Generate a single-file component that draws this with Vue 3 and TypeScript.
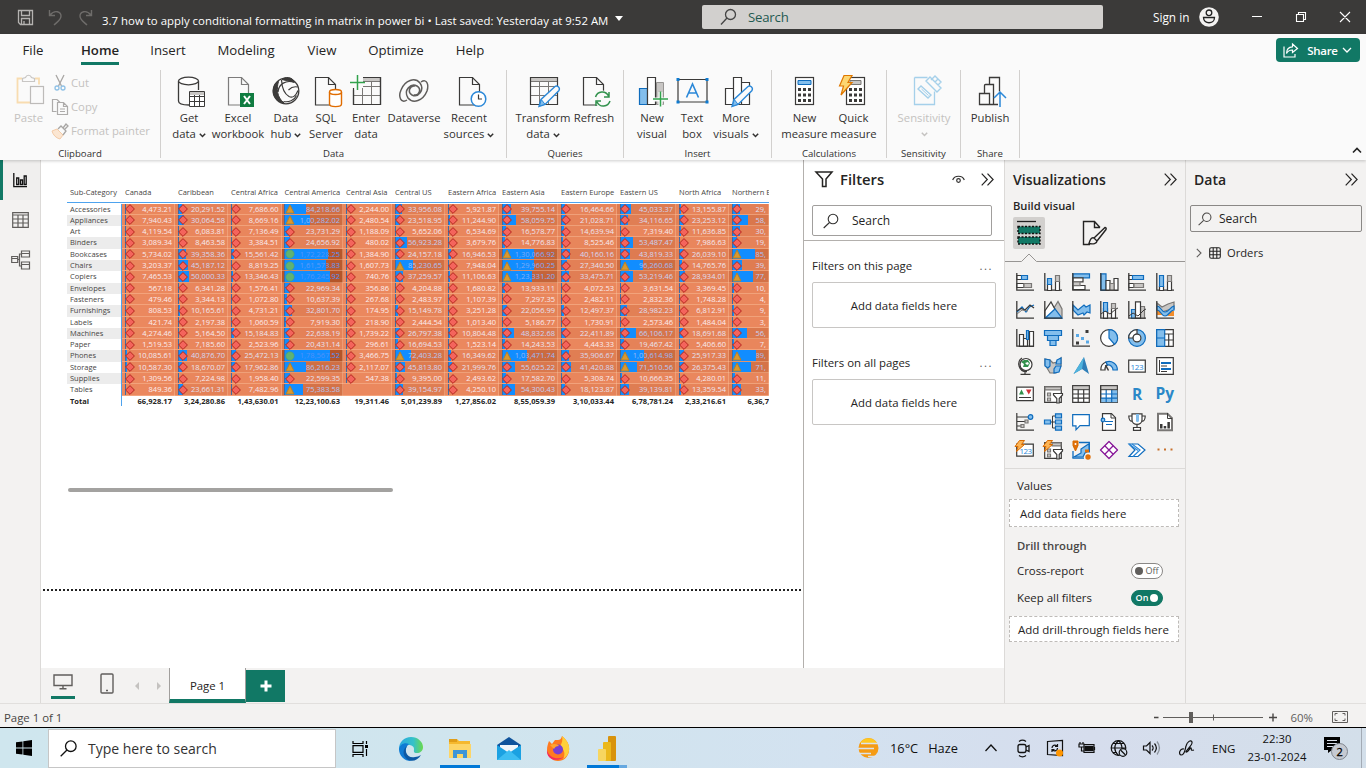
<script setup lang="ts">
const K = '#3b3a39'
const G = '#797775'
const B = '#0f6cbd'
const L = '#83beec'

const page = (x: number, w = 21) =>
  `<path d="M${x + 0.5} 2.5h${w - 8}l7 7v20.500h-${w - 1}z" fill="#fafafa" stroke="${K}" stroke-width="1.2"/><path d="M${x + w - 7.5} 2.500v7h7" fill="none" stroke="${K}" stroke-width="1.2"/>`
const pencil = `<path d="M12 31.500l2-7L28 11.500c2-1.500 5.500 1 4 4L18 29.500z" fill="#fafafa" stroke="#2b88d8" stroke-width="1.4"/><path d="M12.500 31l1.800-6.500 3.700 4.800z" fill="${L}" stroke="#2b88d8"/>`
const grid = (c: string) =>
  `<path d="M3.500 2.500h27v27h-27zM3.500 11.500h27M3.500 20.500h27M12.500 6v23M21.500 6v23" fill="none" stroke="${c}"/><path d="M3.500 2.500h27v4h-27z" fill="#c8c6c4" stroke="${c}"/><path d="M3.500 2.500h27v27h-27z" fill="none" stroke="${K}" stroke-width="1.2"/>`
const calc = (x: number) =>
  `<rect x="${x + 0.5}" y="2.500" width="18" height="27" fill="#fff" stroke="${K}" stroke-width="1.200"/><path d="M${x + 3} 13h3v3h-3zM${x + 8} 13h3v3h-3zM${x + 13} 13h3v3h-3zM${x + 3} 18.500h3v3h-3zM${x + 8} 18.500h3v3h-3zM${x + 13} 18.500h3v3h-3zM${x + 3} 24h3v3h-3zM${x + 8} 24h3v3h-3zM${x + 13} 24h3v3h-3z" fill="${K}"/>`

const big: Record<string, string> = {
  get: `<path d="M5.500 6v20c0 2.500 4.500 4 10.500 4M25.500 6v9" fill="none" stroke="${K}" stroke-width="1.300"/><ellipse cx="15.500" cy="6" rx="10" ry="3.800" fill="#fff" stroke="${K}" stroke-width="1.300"/><path d="M16.500 16.500h15v15h-15zM16.500 21.500h15M16.500 26.500h15M21.500 17v14M26.500 17v14" fill="#fff" stroke="${K}"/><path d="M17 17h14v3H17z" fill="#c8c6c4"/>`,
  excel: `<g opacity=".65">${page(6)}</g><rect x="18" y="18" width="14" height="14" fill="#107c41"/><path d="M22 21l6 8M28 21l-6 8" stroke="#fff" stroke-width="2"/>`,
  hub: `<circle cx="16" cy="16" r="12.800" fill="#fafafa" stroke="${K}" stroke-width="1.300"/><path d="M12 4.500C15 1.500 22 1.500 24.500 7L20 6.200c-3-.5-5.500-.8-8-1.700z" fill="${K}" stroke="${K}"/><path d="M8.500 6.500C6.500 13 6.500 22 14 28 7 27 3 21 3.200 15.500 3.500 11 5.500 8 8.500 6.500z" fill="${K}" stroke="${K}"/><path d="M11.500 5c.5 8 3 14 7.500 16.500M24.500 7.500C16 4.500 8.500 9 8 17M19 21.500c4 2 7-1 9-6M13.500 26.500c5 1 11-1 13-6M18.500 15c2-2 5-4 9-3" fill="none" stroke="${K}" stroke-width="1.200"/>`,
  sql: `${page(5)}<path d="M19.500 17v12c0 3.500 12 3.500 12 0V17" fill="#fff" stroke="#e06c00" stroke-width="1.400"/><ellipse cx="25.500" cy="17" rx="6" ry="2.500" fill="#fff" stroke="#e06c00" stroke-width="1.400"/>`,
  enter: `${grid(G)}<path d="M0 0h13v13H0z" fill="#fafafa"/><path d="M7.500 0v15M0 7.500h15" stroke="#31a24c" stroke-width="1.500"/><path d="M13 2.500h17.500v27h-27V15" fill="none" stroke="${K}" stroke-width="1.200"/>`,
  dataverse: `<path d="M9 25C3 29 0 22 3 15 7 5 17 2 22 8c5 7-2 15-8 12-5-3-2-10 3-9M23 7c6-4 8 3 6 9-4 10-14 13-19 7-5-8 3-15 9-12 5 3 2 10-3 9" fill="none" stroke="#605e5c" stroke-width="1.500"/>`,
  recent: `${page(6)}<circle cx="25.500" cy="24" r="7.300" fill="#fff" stroke="#2b88d8" stroke-width="1.500"/><path d="M25.500 19.500V24H29" fill="none" stroke="${K}" stroke-width="1.200"/>`,
  transform: `${grid(G)}${pencil}`,
  refresh: `${page(5)}<circle cx="24.500" cy="24" r="8.500" fill="#fafafa"/><path d="M17.500 22c2-6 10-7 13-1M31 17v5h-5M32 26c-2 6-10 7-13 1M18 31v-5h5" fill="none" stroke="#31914c" stroke-width="1.500"/>`,
  newvisual: `<path d="M3.500 13.500h8v16h-8z" fill="${L}" stroke="${B}" stroke-width="1.200"/><path d="M20.500 7.500h7v22h-7z" fill="#c8c6c4" stroke="#979593"/><path d="M11.500 2.500h8v27h-8z" fill="#fff" stroke="${K}" stroke-width="1.200"/><path d="M24.500 17v15M17 24.500h15" stroke="#fafafa" stroke-width="4"/><path d="M24.500 16.500v15M17 24h15" stroke="#31a24c" stroke-width="1.500"/>`,
  textbox: `<path d="M2 4.500h29v22.500H2z" fill="#fafafa" stroke="${K}" stroke-width="1.200"/><path d="M.5 3h3v3h-3zM29.500 3h3v3h-3zM.5 25.500h3v3h-3zM29.500 25.500h3v3h-3z" fill="#0f7bd0"/><path d="M10.500 22.500L16.500 9l6 13.500M12.500 18h8" fill="none" stroke="#2b88d8" stroke-width="1.600"/>`,
  more: `<path d="M5.500 13.500h8v16h-8zM21.500 7.500h8v22h-8zM13.500 2.500h8v27h-8z" fill="#fff" stroke="${K}" stroke-width="1.200"/>${pencil}`,
  measure: `${calc(6)}<path d="M9 5.500h13v4H9z" fill="${L}" stroke="${B}"/>`,
  quick: `${calc(8)}<path d="M12 5.500h11v4H12z" fill="#c8c6c4" stroke="${G}"/><path d="M6 .5h8l-4 7h4L3 20l2.500-9h-4z" fill="#fcd672" stroke="#e07800" stroke-width="1.200"/>`,
  sens: `<path d="M6.500 2.500h13M6.500 2.500v27h20v-13" fill="none" stroke="#a5d0ea" stroke-width="1.300"/><g fill="#fafafa" stroke="#a5d0ea" stroke-width="1.400"><path d="M10 14l3-3 10 9-3 3z"/><path d="M13.500 14l7 6.500" stroke-width="1"/><path d="M18 6l4-4 11 11-4 4zM23 5l4-4 3 3-2 2M27 7l3-3 3 3-3 3"/></g>`,
  publish: `<path d="M15.500 10V2.500h10v14M10.500 18v-7.500c0-1 1-1 1-1h8V29.500M5.500 18.500h10v11h-10zM15 29.500h9" fill="none" stroke="${K}" stroke-width="1.300"/><path d="M26 32V17M20 23l6-6 6 6" fill="none" stroke="#2b88d8" stroke-width="1.500"/>`,
}

interface Btn { i: string; w: number; t: string; s?: string; c?: boolean; off?: boolean }
interface Group { name: string; w: number; pad: number; items: Btn[] }
const groups: Group[] = [
  { name: 'Data', w: 346, pad: 4, items: [
    { i: 'get', w: 48, t: 'Get', s: 'data', c: true }, { i: 'excel', w: 50, t: 'Excel', s: 'workbook' },
    { i: 'hub', w: 46, t: 'Data', s: 'hub', c: true }, { i: 'sql', w: 34, t: 'SQL', s: 'Server' },
    { i: 'enter', w: 46, t: 'Enter', s: 'data' }, { i: 'dataverse', w: 50, t: 'Dataverse' },
    { i: 'recent', w: 60, t: 'Recent', s: 'sources', c: true }] },
  { name: 'Queries', w: 117, pad: 6, items: [
    { i: 'transform', w: 60, t: 'Transform', s: 'data', c: true }, { i: 'refresh', w: 42, t: 'Refresh' }] },
  { name: 'Insert', w: 148, pad: 8, items: [
    { i: 'newvisual', w: 40, t: 'New', s: 'visual' }, { i: 'textbox', w: 40, t: 'Text', s: 'box' },
    { i: 'more', w: 48, t: 'More', s: 'visuals', c: true }] },
  { name: 'Calculations', w: 115, pad: 8, items: [
    { i: 'measure', w: 49, t: 'New', s: 'measure' }, { i: 'quick', w: 49, t: 'Quick', s: 'measure' }] },
  { name: 'Sensitivity', w: 74, pad: 7, items: [{ i: 'sens', w: 60, t: 'Sensitivity', s: '', c: true, off: true }] },
  { name: 'Share', w: 59, pad: 7, items: [{ i: 'publish', w: 44, t: 'Publish' }] },
]

const ax = `<path d="M.8 0v17.200H18" fill="none" stroke="${K}" stroke-width="1.300"/>`
const bb = `fill="${L}" stroke="${B}" stroke-width="1.200"`
const gb = `fill="#c8c6c4" stroke="${G}" stroke-width="1.200"`
const wb = `fill="#fff" stroke="${K}" stroke-width="1.200"`
const bolt = `<path d="M3.500-.5h5l-3 4h3L.5 10.500l1.500-5h-3z" fill="#fcb455" stroke="#d86a00"/>`
const funnel = `<path d="M9.500 8.500h9v1.500l-3.300 3.500v4.500h-2.400v-4.500L9.500 10z" ${wb}/>`
const viz: string[] = [
  `${ax}<path d="M1 2.500h5v4H1zM1 10.500h7v4H1z" ${wb}/><path d="M5.500 2.500h6v4h-6z" ${bb}/><path d="M8 10.500h7.500v4H8z" ${gb}/>`,
  `${ax}<path d="M3.500 11.500h4v6h-4zM11.500 8.500h4v9h-4z" ${wb}/><path d="M3.500 5.500h4v6h-4z" ${bb}/><path d="M11.500 2.500h4v6h-4z" ${gb}/>`,
  `<path d="M1 .8h16.500v4H1z" ${bb}/><path d="M1 4.800h10v4H1zM1 12.500h12v4H1z" ${wb}/><path d="M1 8.800h7v3.800H1z" ${gb}/>${ax}`,
  `<path d="M1 .8h5v16.500H1z" ${bb}/><path d="M6 7.500h4v10H6zM14 5.500h4v12h-4z" ${wb}/><path d="M10 10.500h4v7h-4z" ${gb}/>${ax}`,
  `${ax}<path d="M1 10.500h5v4H1zM1 2.500h4v4H1z" ${wb}/><path d="M4.500 2.500h11v4h-11z" ${bb}/><path d="M6 10.500h9.500v4H6z" ${gb}/>`,
  `${ax}<path d="M3.500 13.500h4v4h-4zM11.500 8.500h4v9h-4z" ${wb}/><path d="M3.500 2.500h4v11h-4z" ${bb}/><path d="M11.500 2.500h4v6h-4z" ${gb}/>`,
  `${ax}<path d="M1 11l5-5 4 5 3.500-5 4.500-2" fill="none" stroke="${B}" stroke-width="1.300"/><path d="M1 10l4-2.500 4 1.500 5-5 4 3" fill="none" stroke="${K}" stroke-width="1.300"/><path d="M1 13l5-4 6 1" fill="none" stroke="${G}"/>`,
  `<path d="M8 10l6-9.500L18 8v9H8z" ${gb}/><path d="M.8 17V10L7 1l7 13-3 3z" ${wb}/><path d="M1 17.200L11 8l7 9.200z" ${bb}/>${ax}`,
  `<path d="M1 4l5 5 6-5 2 2 4-2v8l-3-1-3 3-1-2-5 2-5-5z" ${bb}/>${ax}`,
  `<path d="M3.500 7.500h4v10h-4zM11.500 7.500h4v10h-4z" ${wb}/><path d="M3.500 1.500h4v9h-4z" ${bb}/><path d="M11.500 2.500h4v5h-4z" ${gb}/><path d="M1 13l4-3 5 3 6-5 2-1" fill="none" stroke="${K}"/>${ax}`,
  `<path d="M3.500 8.500h4v9h-4z" ${bb}/><path d="M12.500 5.500h4v12h-4z" ${gb}/><path d="M7.500 .8h5v16.500h-5z" ${wb}/><path d="M1 15l4-3 5 3 6-6 2-1" fill="none" stroke="${K}"/>${ax}`,
  `<path d="M1 2l5 4 6-3 6-2v7l-6 1-6 2-5-2z" ${gb}/><path d="M1 9h5v5H1zM12 10h6v5h-6z" fill="#f28d2c"/><path d="M1 5c4 0 4 6 8 6s5-5 9-6v4c-4 0-5 6-9 6S5 9 1 9z" ${bb}/>${ax}`,
  `<path d="M3.500 5.500h4v12h-4zM7.500 9.500h4v8h-4zM13.500 2.500h4v15h-4z" ${wb}/><path d="M10.500 1.500h2v9h-2z" ${bb}/>${ax}`,
  `<path d="M.5 1.500h17v5h-17zM3.500 6.500h11v5h-11zM6 11.500h6v5H6z" ${bb}/>`,
  `${ax}<path d="M4 5h3v3H4zM9 8h3v3H9zM14 11.500h3v3h-3z" fill="#5aa9e6"/><path d="M13.500 1h3v3h-3zM4 12.500h3v3H4z" fill="${K}"/>`,
  `<circle cx="9" cy="9" r="8.400" ${wb}/><path d="M9 9V.6a8.400 8.400 0 0 1 5.500 14.800z" ${bb}/>`,
  `<circle cx="9" cy="9" r="8.400" ${bb}/><path d="M9 .6A8.400 8.400 0 0 0 .6 9h4.500A4 4 0 0 1 9 5z" ${wb}/><circle cx="9" cy="9" r="3.900" ${wb}/>`,
  `<path d="M.7 .7h16.600v16.600H.7z" ${wb}/><path d="M.7 .7h8v16.600h-8zM.7 9h8" ${bb}/><path d="M8.700 5h8.600M8.700 11h8.600M12.700 5v12" stroke="${K}" stroke-width="1.200"/>`,
  `<circle cx="10" cy="7.500" r="6" ${wb}/><path d="M8 3l4 0 2 3-2 4-5 0 1-3-3-2z" fill="#31914c"/><path d="M9 6l3-1 1 2-2 1z" fill="#fff"/><path d="M6 1C0 5 3 15 11 14.500M9 14.500v2.500M4.500 17.300h10" fill="none" stroke="${K}" stroke-width="1.300"/>`,
  `<path d="M1 2l5 1 3 3 4-1 4-4v8l-4 3-1 4H6l-3-5-2-3z" ${gb}/><path d="M1 2l5 1v6l-2 2-3-2z" ${bb}/><path d="M12 9h5l-2 6-5 1v-4z" ${bb}/><path d="M13 3l4-2v6h-5z" ${bb}/>`,
  `<path d="M12 0l5 17-7-5-8.500 5z" fill="#2f7fb8"/><path d="M12 0l-2 12-8.500 5z" fill="#4fb3dd"/>`,
  `<path d="M.8 13A8.200 8.200 0 0 1 6 5l1.500 3A5 5 0 0 0 5 13z" ${wb}/><path d="M6 5a8.200 8.200 0 0 1 11.300 8H13A5 5 0 0 0 7.500 8z" ${bb}/><path d="M8.500 13.500L5.500 8" stroke="${K}" stroke-width="1.500"/>`,
  `<path d="M.7 3.200h16.600v12H.7z" ${wb}/><text x="2.600" y="12.500" font-size="8" font-family="Open Sans" textLength="13" fill="#2b88d8">123</text>`,
  `<path d="M.7 .7h16.600v16.600H.7z" ${wb}/><path d="M3.500 3v12" stroke="${K}"/><path d="M5 6h10M5 12h10" stroke="${B}" stroke-width="2"/><path d="M5 9h6M5 14.500h6" stroke="${K}"/>`,
  `<path d="M.7 2.200h16.600v13.500H.7z" ${wb}/><path d="M3 9.500L5.500 4.500 8 9.500z" fill="#31914c"/><path d="M10 4.500h5.500l-2.700 5z" fill="#d13438"/><path d="M3 12.500h12" stroke="${K}"/>`,
  `<path d="M.7 1.500h16.600v15.800H.7z" ${wb}/><path d="M1 1.800h16v3H1z" ${gb}/><path d="M3.500 8h3v3h-3zM3.500 13h3v3h-3z" ${gb}/>${funnel}`,
  `<path d="M.7 .7h16.600v16.600H.7zM.7 9h16.600M.7 13.200h16.600M6.200 4v13M11.700 4v13" ${wb}/><path d="M.7 .7h16.600v4H.7z" fill="#c8c6c4" stroke="${K}"/>`,
  `<path d="M.7 .7h16.600v16.600H.7z" ${wb}/><path d="M11.700 5h5.600v12.300H1V13h10.700z" fill="${L}"/><path d="M.7 9h16.600M.7 13.200h16.600M6.200 4v13M11.700 4v13" stroke="${B}" stroke-width="1.200"/><path d="M.7 .7h16.600v4H.7z" fill="#c8c6c4" stroke="${K}"/><path d="M.7 .7v16.600" stroke="${K}"/>`,
  `<text x="4" y="14.500" font-size="15.500" font-weight="700" font-family="Open Sans" textLength="9.500" fill="#2b88c8">R</text>`,
  `<text x="-.5" y="13.500" font-size="15.500" font-weight="700" font-family="Open Sans" textLength="18.500" fill="#2b88c8">Py</text>`,
  `<path d="M.8 0v17.200H18M1 4h12M1 8.500h8M1 13h4" fill="none" stroke="${K}" stroke-width="1.200"/><circle cx="14.500" cy="4" r="2.300" ${bb}/><path d="M9 7h3v3H9zM5 11.500h3v3H5z" ${gb}/>`,
  `<path d="M6 9h5M8.500 3v12M8.500 3h3M8.500 15h3" fill="none" stroke="${K}"/><path d="M.5 7h6v4h-6zM11.500 .8h6v4h-6zM11.500 7h6v4h-6zM11.500 13.200h6v4h-6z" ${bb}/>`,
  `<path d="M.7 1.700h16.600v11H8L4 16.800v-4H.7z" fill="#fff" stroke="${B}" stroke-width="1.200"/>`,
  `<path d="M2.500 .7h9l4 4v12.600h-13z" ${wb}/><path d="M11 .7v4.300h4.500" fill="none" stroke="${K}"/><path d="M5 8.500h8M6 11.500h6" stroke="${B}"/><path d="M2.500 10.500v3" stroke="${K}"/><circle cx="3" cy="7" r="1.800" ${bb}/>`,
  `<path d="M4 .8h10v6c0 6-10 6-10 0zM4 3H.8c0 4 1 5 3.500 5.500M14 3h3.200c0 4-1 5-3.500 5.500M9 11.500v3M5.500 14.500h7v2.800h-7z" ${wb}/><path d="M8 1h3v7c-1 2-3 1-3 0z" fill="${L}"/>`,
  `<path d="M2 .7h9.500l4.500 4.500v12.100H2z" fill="#fff" stroke="${G}" stroke-width="2"/><path d="M11.500 0v5.500h4.500" fill="none" stroke="${K}"/><path d="M4 11h2.500v4.500H4zM7.700 13h2.500v2.500H7.700zM11.400 9h2.500v6.500h-2.500z" fill="${K}"/>`,
  `<path d="M.7 3.200h16.600v12H.7z" ${wb}/><text x="3.500" y="12.500" font-size="8" font-family="Open Sans" textLength="12.500" fill="#2b88d8">123</text>${bolt}`,
  `<path d="M.7 1.500h16.600v15.800H.7z" ${wb}/><path d="M8 1.800h9v3H8z" ${gb}/><path d="M3.500 8h3v3h-3zM3.500 13h3v3h-3z" ${gb}/>${funnel}${bolt}`,
  `<path d="M7 1.500h10.300v10M1 10v7.200h11" fill="none" stroke="${B}" stroke-width="1.300"/><path d="M15 4l-6 4v4l-7 4h9l2-4 4-2V3z" ${bb}/><path d="M1 0h5v4.500L3.500 10 1 4.500z" fill="#e0700a" stroke="#d86a00"/><circle cx="3.500" cy="3" r="1" fill="#fff"/><circle cx="16" cy="16" r="2.700" fill="#e0700a"/><path d="M13 8.500h4v3h-4z" fill="#e0700a"/>`,
  `<g fill="#fff" stroke="#881798" stroke-width="1.300" stroke-linejoin="round"><path d="M9 .5L17.500 9 9 17.500.5 9z"/><path d="M4.800 4.800l8.400 8.400M13.200 4.800l-8.400 8.400"/></g>`,
  `<path d="M1 3h9l7 6-7 6.500H1L7 9z" fill="#fff" stroke="#0f6cbd" stroke-width="1.200"/><path d="M4 3l8 6-7 6.500M1 3l9 6.500" fill="none" stroke="#2b88d8" stroke-width="1.200"/>`,
  `<path d="M1.500 7.500h2v2h-2zM8 7.500h2v2H8zM14.500 7.500h2v2h-2z" fill="#c8702c"/>`,
]

const cols = [
  { n: 'Canada', w: 53 }, { n: 'Caribbean', w: 53 }, { n: 'Central Africa', w: 53.5 }, { n: 'Central America', w: 61.5 },
  { n: 'Central Asia', w: 49 }, { n: 'Central US', w: 53 }, { n: 'Eastern Africa', w: 54 }, { n: 'Eastern Asia', w: 59 },
  { n: 'Eastern Europe', w: 59 }, { n: 'Eastern US', w: 59 }, { n: 'North Africa', w: 53 }, { n: 'Northern E', w: 40 },
]
const raw = `Accessories|4,473.21|20,291.52|7,686.60|84,218.66|2,244.00|33,956.08|5,921.87|39,755.14|16,464.66|45,033.37|13,155.87|29,
Appliances|7,940.43|30,064.58|8,669.16|1,00,282.02|2,480.54|23,518.95|11,244.90|58,059.75|21,028.71|34,116.65|23,253.12|58,
Art|4,119.54|6,083.81|7,136.49|23,731.29|1,188.09|5,652.06|6,534.69|16,578.77|14,639.94|7,319.40|11,636.85|30,
Binders|3,089.34|8,463.58|3,384.51|24,656.92|480.02|56,923.28|3,679.76|14,776.83|8,525.46|53,487.47|7,986.63|19,
Bookcases|5,734.02|39,358.36|15,561.42|1,72,228.25|1,384.90|24,157.18|16,946.53|1,30,066.92|40,160.16|43,819.33|26,039.10|85,
Chairs|3,203.37|45,187.12|8,819.25|1,61,573.83|1,607.73|85,230.65|7,948.04|1,29,960.25|27,340.50|96,260.68|14,765.76|39,
Copiers|7,465.53|50,000.33|13,346.43|1,76,245.92|740.76|37,259.57|11,106.63|1,23,331.20|33,475.71|53,219.46|28,934.01|77,
Envelopes|567.18|6,341.28|1,576.41|22,969.34|356.86|4,204.88|1,680.82|13,933.11|4,072.53|3,631.54|3,369.45|10,
Fasteners|479.46|3,344.13|1,072.80|10,637.39|267.68|2,483.97|1,107.39|7,297.35|2,482.11|2,832.36|1,748.28|4,
Furnishings|808.53|10,165.61|4,731.21|32,801.70|174.95|15,149.78|3,251.28|22,056.99|12,497.37|28,982.23|6,812.91|9,
Labels|421.74|2,197.38|1,060.59|7,919.30|218.90|2,444.54|1,013.40|5,186.77|1,730.91|2,573.46|1,484.04|3,
Machines|4,274.46|5,164.50|15,184.83|22,638.19|1,739.22|26,797.38|10,804.48|48,832.68|22,411.89|66,106.17|18,691.68|56,
Paper|1,519.53|7,185.60|2,523.96|20,431.14|296.61|16,694.53|1,523.14|14,243.53|4,443.33|19,467.42|5,406.60|7,
Phones|10,085.61|40,876.70|25,472.13|1,78,567.52|3,466.75|72,403.28|16,349.62|1,03,471.74|35,906.67|1,00,614.98|25,917.33|89,
Storage|10,587.30|18,670.07|17,962.86|86,216.23|2,117.07|45,813.80|21,999.76|55,625.22|41,420.88|71,510.56|26,375.43|71,
Supplies|1,309.56|7,224.98|1,958.40|22,599.35|547.38|9,395.00|2,493.62|17,582.70|5,308.74|10,666.35|4,280.01|11,
Tables|849.36|23,661.31|7,482.96|75,383.58||39,154.97|4,250.10|54,300.43|18,123.87|39,139.81|13,359.54|33,`
const totals = ['66,928.17', '3,24,280.86', '1,43,630.01', '12,23,100.63', '19,311.46', '5,01,239.89', '1,27,856.02', '8,55,059.39', '3,10,033.44', '6,78,781.24', '2,33,216.61', '6,36,7']

const mix = (a: number[], b: number[], t: number) => `rgb(${a.map((v, i) => Math.round(v + (b[i] - v) * t)).join(',')})`
const rows = raw.split('\n').map((line) => {
  const [name, ...vals] = line.split('|')
  return {
    name,
    cells: vals.map((s, i) => {
      const v = i === 11 ? Number(s.replace(',', '')) * 1000 + 500 : Number(s.replace(/,/g, ''))
      const t = Math.min(1, v / 178567)
      const span = i === 11 ? 66 : cols[i].w
      return {
        s,
        bar: v * span * 0.0000042,
        bg: mix([235, 136, 94], [180, 84, 40], t),
        fg: mix([252, 238, 240], [80, 145, 250], t),
        kind: v > 135000 ? 'c' : v > 70000 ? 't' : 'd',
      }
    }),
  }
})
const tabs = [['File', 33], ['Home', 100], ['Insert', 168], ['Modeling', 246], ['View', 322], ['Optimize', 396], ['Help', 470]] as [string, number][]
const tabWidths = tabs.map(([t, c], i) => ({ t, w: i === 0 ? 66 : 2 * (c - edge(i)) }))
function edge(i: number): number {
  return i === 0 ? 0 : 2 * tabs[i - 1][1] - edge(i - 1)
}
</script>

<template>
  <div class="app">
    <header class="title">
      <svg class="quick" viewBox="0 0 90 24" width="90" height="24"><g fill="none" stroke="#b5b3b1" stroke-width="1.300"><path d="M6.500 4.500h14v14h-12l-2-2zM9.500 4.500v5h8v-5M9.500 18.500v-6h8v6M12 18v-3"/></g><g fill="none" stroke="#6e6c6a" stroke-width="1.400"><path d="M37.500 4v5.500h5.500M38 9c5-6 11-3 11 1s-4 6-7 9M79.500 4v5.500H74M79 9c-5-6-11-3-11 1s4 6 7 9"/></g></svg>
      <span class="doc">3.7 how to apply conditional formatting in matrix in power bi • Last saved: Yesterday at 9:52 AM</span>
      <i class="drop"></i>
      <div class="tsearch"><svg width="18" height="18" viewBox="0 0 18 18"><circle cx="10.500" cy="6.500" r="5" fill="none" stroke="#444" stroke-width="1.300"/><path d="M7 10L1 16.500" stroke="#444" stroke-width="1.300"/></svg><span>Search</span></div>
      <span class="signin">Sign in</span>
      <svg class="user" width="20" height="20" viewBox="0 0 20 20"><circle cx="10" cy="10" r="9.800" fill="#f3f2f1"/><circle cx="10" cy="5.800" r="2.800" fill="none" stroke="#222" stroke-width="1.300"/><path d="M4.500 10.500h11c0 7-11 7-11 0z" fill="none" stroke="#222" stroke-width="1.300"/></svg>
      <svg class="win" width="110" height="20" viewBox="0 0 110 20" fill="none" stroke="#fff" stroke-width="1.100"><path d="M5 9.500h10M49.500 7.500h7v7h-7zM51.500 7.500v-2h7v7h-2M93 5l10 10M103 5L93 15"/></svg>
    </header>

    <section class="ribbon">
      <nav class="tabs">
        <div v-for="(t, i) in tabWidths" :key="t.t" class="tab" :class="{ on: i === 1 }" :style="{ width: t.w + 'px' }"><span>{{ t.t }}</span></div>
        <button class="share"><svg width="16" height="15" viewBox="0 0 16 15" fill="none" stroke="#fff" stroke-width="1.200"><path d="M1 3.500v10.500h11v-3M9.500 1l5 4.500-5 4V7C6 7 4.500 8.500 3.500 10.500 3.500 6 6 4 9.500 3.800z"/></svg><span>Share</span><svg width="10" height="7" viewBox="0 0 10 7" fill="none" stroke="#fff" stroke-width="1.300"><path d="M1 1l4 4 4-4"/></svg></button>
      </nav>
      <div class="groups">
        <div class="group clip">
          <div class="cliprow">
            <div class="paste"><svg width="30" height="34" viewBox="0 0 30 34" fill="none"><path d="M7 5.500H2.500v24H16M20 5.500h4v6" stroke="#f8dcb0" stroke-width="1.800"/><path d="M7.500 8.500v-3l3-1c1-3 5-3 6 0l3 1v3z" stroke="#c8c6c4" stroke-width="1.200"/><rect x="15.500" y="13.500" width="13" height="17" fill="#fafafa" stroke="#bdbbb9" stroke-width="1.200"/></svg><span>Paste</span></div>
            <div class="small">
              <div><svg width="18" height="18" viewBox="0 0 18 18" fill="none"><path d="M5 1l5.500 11M13 1L7.500 12" stroke="#a8a6a4" stroke-width="1.300"/><circle cx="6" cy="14" r="2" stroke="#8fc1e6" stroke-width="1.300"/><circle cx="12" cy="14" r="2" stroke="#8fc1e6" stroke-width="1.300"/></svg>Cut</div>
              <div><svg width="18" height="18" viewBox="0 0 18 18" fill="none" stroke="#adabaa" stroke-width="1.200"><path d="M6 1.500H1.500v12h4M6.500 4.500h6l4 4v8h-10zM12.500 4.500v4h4M9 11h5M9 13.500h5M6 1.500l3 3"/></svg>Copy</div>
              <div><svg width="18" height="18" viewBox="0 0 18 18" fill="none"><path d="M1 9l5-2 6 6-3 4c-4-1-7-4-8-8z" fill="#fbe6d2" stroke="#f3cba8"/><path d="M7 7l3-3 5 5-3 4M12 6l3-4 2 2-3 3" stroke="#a8a6a4" stroke-width="1.300"/></svg>Format painter</div>
            </div>
          </div>
          <div class="gname">Clipboard</div>
        </div>
        <div v-for="g in groups" :key="g.name" class="group" :style="{ width: g.w + 'px' }">
          <div class="btns" :style="{ paddingLeft: g.pad + 'px' }">
            <div v-for="b in g.items" :key="b.i" class="btn" :class="{ off: b.off }" :style="{ width: b.w + 'px' }">
              <svg class="bico" width="34" height="34" viewBox="0 0 34 34" v-html="big[b.i]"></svg>
              <span>{{ b.t }}</span>
              <span v-if="b.s !== undefined" class="l2">{{ b.s }}<svg v-if="b.c" class="chev" width="7" height="5" viewBox="0 0 7 5"><path d="M.8.8l2.700 2.700L6.200.8" fill="none" stroke="currentColor" stroke-width="1.500"/></svg></span>
            </div>
          </div>
          <div class="gname">{{ g.name }}</div>
        </div>
        <svg class="collapse" width="10" height="7" viewBox="0 0 10 7"><path d="M1 5.500l4-4 4 4" fill="none" stroke="#222" stroke-width="1.600"/></svg>
      </div>
    </section>

    <main class="body">
      <aside class="rail">
        <div class="r sel"><svg width="15" height="15" viewBox="0 0 15 15" fill="none" stroke="#111" stroke-width="1.300"><path d="M.8 0v13.700H14M3.700 5h2v6.500h-2zM7.500 7h2v4.500h-2zM11.200 3h2v8.500h-2z"/></svg></div>
        <div class="r"><svg width="17" height="16" viewBox="0 0 17 16" fill="none" stroke="#605e5c" stroke-width="1.200"><path d="M.7.700h15.600v14.600H.7zM.7 3h15.600M.7 7h15.600M.7 11h15.600M6 3v12M11 3v12"/></svg></div>
        <div class="r"><svg width="19" height="20" viewBox="0 0 19 20" fill="none" stroke="#605e5c" stroke-width="1.200"><path d="M10.500 1h8v6h-8zM10.500 12h8v7h-8zM10.500 3.500h8M10.500 14.500h8M.7 6.500h6v6h-6zM.7 8.500h6M6.700 9.500h2M10.500 4H8.500v12h2"/></svg></div>
      </aside>

      <div class="center">
        <div class="upper">
          <div class="canvas">
            <div class="matrix">
              <div class="mrow mhead"><div class="rh">Sub-Category</div><div v-for="c in cols" :key="c.n" class="ch" :style="{ width: c.w + 'px' }">{{ c.n }}</div></div>
              <div class="mbody">
                <div v-for="(r, ri) in rows" :key="r.name" class="mrow" :class="{ alt: ri % 2 }">
                  <div class="rh">{{ r.name }}</div>
                  <div v-for="(c, ci) in r.cells" :key="ci" class="cell" :style="{ width: cols[ci].w + 'px', background: c.bg, color: c.fg }">
                    <template v-if="c.s">
                      <i class="bar" :style="{ width: c.bar + 'px' }"></i>
                      <svg class="kpi" width="10" height="10" viewBox="0 0 10 10"><path v-if="c.kind === 'd'" d="M5 .6L9.400 5 5 9.400.6 5z" fill="#f4645c" stroke="#b3261e"/><path v-else-if="c.kind === 't'" d="M5 1l4 8H1z" fill="#d9982f" stroke="#b5802a"/><circle v-else cx="5" cy="5" r="4.200" fill="#5fb373" stroke="#4a9a78" stroke-width=".6"/></svg>
                      <span>{{ c.s }}</span>
                    </template>
                  </div>
                </div>
                <div class="mrow total"><div class="rh">Total</div><div v-for="(t, i) in totals" :key="i" class="tcell" :style="{ width: cols[i].w + 'px' }">{{ t }}</div></div>
              </div>
            </div>
            <div class="hscroll"></div>
            <div class="dots"></div>
          </div>

          <aside class="filters">
            <div class="fhead"><svg width="18" height="17" viewBox="0 0 18 17"><path d="M1 1h16l-6 7v7.500H7.500V8z" fill="none" stroke="#252423" stroke-width="1.500"/></svg><b>Filters</b>
              <svg class="eye" width="13" height="9" viewBox="0 0 13 9" fill="none" stroke="#323130" stroke-width="1.200"><path d="M.7 5C2.500 0 10.500 0 12.300 5"/><circle cx="6.500" cy="5.500" r="1.800"/></svg>
              <svg width="13" height="13" viewBox="0 0 13 13" fill="none" stroke="#252423" stroke-width="1.200"><path d="M.7.700l5.600 5.800-5.600 5.800M6.500.700l5.600 5.800-5.600 5.800"/></svg></div>
            <div class="fsearch"><svg width="16" height="16" viewBox="0 0 16 16" fill="none" stroke="#323130" stroke-width="1.100"><circle cx="10" cy="6" r="4.800"/><path d="M6.500 9.500L.7 15"/></svg>Search</div>
            <div class="fsec"><div class="flabel"><span>Filters on this page</span><em>...</em></div><div class="fbox">Add data fields here</div></div>
            <div class="fsec two"><div class="flabel"><span>Filters on all pages</span><em>...</em></div><div class="fbox">Add data fields here</div></div>
          </aside>
        </div>
        <div class="pages">
          <div class="dev"><svg width="20" height="16" viewBox="0 0 20 16" fill="none" stroke="#605e5c" stroke-width="1.400"><path d="M1 1h18v10.500H1zM10 12v2.500M6.500 14.800h7"/></svg></div>
          <svg class="phone" width="14" height="21" viewBox="0 0 14 21" fill="none" stroke="#605e5c" stroke-width="1.400"><rect x="1" y="1" width="12" height="19" rx="1"/><path d="M6 17.500h2"/></svg>
          <svg class="arrows" width="28" height="8" viewBox="0 0 28 8" fill="#c4c2c0"><path d="M5 0v8L1 4zM23 0v8l4-4z"/></svg>
          <div class="pg">Page 1</div>
          <div class="add"><svg width="12" height="12" viewBox="0 0 12 12"><path d="M6 .5v11M.5 6h11" stroke="#fff" stroke-width="3"/></svg></div>
        </div>
      </div>

      <aside class="vizp">
        <div class="vhead"><b>Visualizations</b><svg width="13" height="13" viewBox="0 0 13 13" fill="none" stroke="#252423" stroke-width="1.200"><path d="M.7.700l5.600 5.800-5.600 5.800M6.500.700l5.600 5.800-5.600 5.800"/></svg></div>
        <div class="build">Build visual</div>
        <div class="modes">
          <div class="mode"><svg width="26" height="26" viewBox="0 0 26 26"><path d="M1 1.500h19" stroke="#222" stroke-width="1.300"/><g fill="#117865" stroke="#111" stroke-width="1.400" stroke-dasharray="2 1.500"><path d="M2 6.500h22v7H2zM2 17h22v7H2z"/></g></svg></div>
          <svg class="fmt" width="26" height="28" viewBox="0 0 26 28" fill="none" stroke="#252423" stroke-width="1.400"><path d="M8 24.500H1.500v-23h11l5.500 6M12.500 1.500v6H18"/><path d="M12 18L23 7.500c1 0 1.500 1 1 2L15 21M12 18c-3-1-4 2-5 5.500 4 1 8 0 8-2.500z" fill="#f3f2f1"/></svg>
        </div>
        <svg class="notch" width="180" height="9" viewBox="0 0 180 9" fill="none" stroke="#979593"><path d="M0 8.500h16.500L24 1l7.500 7.500H180"/></svg>
        <div class="vgrid"><svg v-for="(v, i) in viz" :key="i" width="20" height="20" viewBox="-1 -1 20 20" v-html="v"></svg></div>
        <div class="wells">
          <div class="wl">Values</div>
          <div class="well">Add data fields here</div>
          <div class="wl drill">Drill through</div>
          <div class="tog"><span>Cross-report</span><div class="sw"><i></i>Off</div></div>
          <div class="tog"><span>Keep all filters</span><div class="sw on">On<i></i></div></div>
          <div class="well d2">Add drill-through fields here</div>
        </div>
      </aside>

      <aside class="datap">
        <div class="vhead"><b>Data</b><svg width="13" height="13" viewBox="0 0 13 13" fill="none" stroke="#252423" stroke-width="1.200"><path d="M.7.700l5.600 5.800-5.600 5.800M6.500.700l5.600 5.800-5.600 5.800"/></svg></div>
        <div class="dsearch"><svg width="14" height="14" viewBox="0 0 16 16" fill="none" stroke="#484644" stroke-width="1.200"><circle cx="10" cy="6" r="4.800"/><path d="M6.500 9.500L.7 15"/></svg>Search</div>
        <div class="tree"><svg width="6" height="10" viewBox="0 0 6 10" fill="none" stroke="#605e5c" stroke-width="1.100"><path d="M.8.800L5 5 .8 9.200"/></svg><svg width="12" height="12" viewBox="0 0 12 12" fill="none" stroke="#252423" stroke-width="1.100"><rect x=".7" y=".7" width="10.600" height="10.600" rx="1.500"/><path d="M.7 4.200h10.600M.7 7.800h10.600M4.200.7v10.600M7.800.7v10.600"/></svg>Orders</div>
      </aside>
    </main>

    <footer class="status">
      <span>Page 1 of 1</span>
      <div class="zoom"><svg width="125" height="14" viewBox="0 0 125 14"><path d="M1 7.500h4.500M116 7.500h8M120 3.500v8" stroke="#484644" stroke-width="1.400"/><path d="M10 7.500h100M60.500 4.500v6" stroke="#605e5c"/><path d="M36 2h4v11h-4z" fill="#605e5c"/></svg><span>60%</span><svg width="16" height="12" viewBox="0 0 16 12" fill="none" stroke="#605e5c"><path d="M.5.500h15v11H.5zM3 4.500v-2h2.500M13 4.500v-2h-2.500M3 7.500v2h2.500M13 7.500v2h-2.500"/></svg></div>
    </footer>

    <footer class="task">
      <div class="start"><svg width="16" height="16" viewBox="0 0 16 16"><path d="M0 2.300l6.500-.9v6.200H0zM7.300 1.300L16 0v7.600H7.300zM0 8.400h6.500v6.200L0 13.700zM7.300 8.400H16V16l-8.700-1.300z" fill="#000"/></svg></div>
      <div class="wsearch"><svg width="17" height="17" viewBox="0 0 17 17" fill="none" stroke="#111" stroke-width="1.300"><circle cx="10.800" cy="6.200" r="5.300"/><path d="M7 10L.7 16.300"/></svg>Type here to search</div>
      <div class="ti view"><svg width="17" height="16" viewBox="0 0 17 16" fill="none" stroke="#000" stroke-width="1.200"><path d="M1 0v2.500h10V0M1 16v-2.500h10V16M1 4.700h10v6.600H1zM14.500 0v3M14.500 8v7"/><path d="M13 4h3v3h-3z" fill="#000" stroke="none"/></svg></div>
      <div class="ti edge"><svg width="24" height="24" viewBox="0 0 24 24"><defs><linearGradient id="eg" x1="0" x2="1"><stop offset="0" stop-color="#2aa8e0"/><stop offset=".6" stop-color="#35c1c9"/><stop offset="1" stop-color="#6bd94b"/></linearGradient></defs><path d="M0 12C0 5 5 0 12 0s12 5 12 10c0 4-3 6-6 6-4 0-3-2-3-4 0-3-3-4-5-4-5 0-8 4-8 8z" fill="url(#eg)"/><path d="M0 12c1-5 6-7 10-5-5 3-5 16 4 17C6 25 0 19 0 12z" fill="#0f7bd4"/><path d="M9 8c-5 5-1 14 7 12 2 0 4-1 6-2-3 5-8 7-13 5-6-4-6-11 0-15z" fill="#0c59a4"/></svg></div>
      <div class="ti run"><svg width="24" height="24" viewBox="0 0 24 24"><path d="M1 2h8l2 2h11v17H1z" fill="#f5b82e"/><path d="M1 7h22v14H1z" fill="#fdd567"/><path d="M1 2h8v3H1z" fill="#e09d18"/><path d="M5 21v-8h14v8h-4v-4H9v4z" fill="#3e95d8"/></svg></div>
      <div class="ti mail"><svg width="24" height="24" viewBox="0 0 24 24"><path d="M0 8l12-8 12 8v5H0z" fill="#0f539c"/><path d="M3 8h18v10H3z" fill="#f1f6fa"/><path d="M0 8l12 8L24 8v15H0z" fill="#1ba1e2"/><path d="M0 23L12 13l12 10z" fill="#3dbdf2"/></svg></div>
      <div class="ti fox"><svg width="24" height="26" viewBox="0 0 24 26"><path d="M12 4c2 0 3-1 4-4 5 4 8 9 7 15-1 6-5 10-11 10S1 20 1 14c0-4 1-6 2-9l3 3 3-4z" fill="#ff7a1f"/><path d="M16 0c5 4 8 9 7 15-1 4-3 6-6 8 3-5 1-10-3-13 2-3 3-6 2-10z" fill="#ffd03a"/><path d="M1 14c2 8 10 10 17 7-8 6-18 2-17-7z" fill="#f5295b"/><circle cx="12" cy="13.500" r="5" fill="#7a3fd0"/><path d="M4 9c4-2 8-1 9 1-3 0-4 1-5 3z" fill="#ffa52e"/></svg></div>
      <div class="ti run pbi"><svg width="20" height="25" viewBox="0 0 20 25"><rect x="11" width="8" height="25" rx="1" fill="#d8930d"/><rect x="6" y="6" width="8" height="19" rx="1" fill="#ebb81c"/><rect x="1" y="13" width="8" height="12" rx="1" fill="#f7d660"/></svg></div>
      <div class="weather"><svg width="24" height="24" viewBox="0 0 24 24"><circle cx="12.500" cy="12" r="10" fill="#f59b14"/><path d="M4 7a10 10 0 0 1 17 0z" fill="#ffc822"/><path d="M5 7.500h18M2 12.500h16M1 17.500h14M12 20.500h10" stroke="#dce3ea" stroke-width="1.700"/></svg><span>16°C</span><span>Haze</span></div>
      <svg class="tray" width="210" height="24" viewBox="981 0 210 24" fill="none" stroke="#111" stroke-width="1.300"><path d="M985.500 15l5.500-6 5.500 6"/><rect x="1018" y="8.500" width="8" height="8" rx="2"/><path d="M1026 11l3-1.500v6l-3-1.500M1019 5.500c2-1.500 5-1.500 7 0M1019 19.500c2 1.500 5 1.500 7 0"/><path d="M1047.500 5.500l15-1v15l-15-1zM1052 12c0-3 3-3.500 5-2M1057.500 8v2.500H1055M1057.500 12c0 3-3 3.500-5 2M1052 16v-2.500h2.500" stroke-width="1.200"/><circle cx="1059.500" cy="17" r="3.500" fill="#ff9500" stroke="none"/><path d="M1084 8.500h10v8h-10zM1094.500 11v3M1080 6v2M1083 6v2M1079 8h5v3h-5zM1081.500 11v4h2" stroke-width="1.200"/><path d="M1085 10.500h8v4h-8z" fill="#111"/><g stroke-width="1.200"><circle cx="1118.500" cy="12" r="7.300"/><path d="M1111 12h15M1118.500 4.500c-5 5-5 10 0 15M1118.500 4.500c3 3 3.500 5 3.500 8M1113 7.500h11M1113 16.500h4"/><circle cx="1123" cy="16.500" r="3.800" fill="#d4dfec"/><path d="M1120.500 14l5 5"/></g><path d="M1143.500 10h3l3.500-3.500v11l-3.500-3.500h-3zM1152 9.500c1.500 1.500 1.500 3.500 0 5M1154.500 7.500c2.500 3 2.500 6 0 9" stroke-width="1.200"/><path d="M1157 5.500c3 4 3 9 0 13" stroke="#8a929c"/><path d="M1184 13c-4-1-6 5-3 6 4 0 4-6 5-9 1-4 5-7 6-4s-6 8-6 10c2 1 4-5 5-4s-1 3 3 2" stroke-width="1.200"/></svg>
      <span class="eng">ENG</span>
      <div class="clock"><span>22:30</span><span>23-01-2024</span></div>
      <svg class="note" width="28" height="26" viewBox="0 0 28 26"><path d="M1 2h16v13H9l-4 3v-3H1z" fill="#000"/><path d="M4 5.500h10M4 8.500h10M4 11.500h7" stroke="#dbe0ea" stroke-width="1.200"/><circle cx="16.500" cy="16.500" r="8" fill="#c6cad2" stroke="#7f858e"/><text x="13.500" y="20.500" font-family="Open Sans" font-size="11" fill="#000" stroke="#000" stroke-width=".3">2</text></svg>
      <div class="peek"></div>
    </footer>
  </div>
</template>

<style>
html, body { margin: 0; overflow: hidden; }
</style>
<style scoped>
* { box-sizing: border-box; }
.app { width: 1366px; height: 768px; display: flex; flex-direction: column; overflow: hidden; font-family: "Open Sans", "Noto Sans", sans-serif; font-size: 11.4px; color: #252423; background: #f3f2f1; white-space: nowrap; }
svg { display: block; flex: none; overflow: visible; }
.title { height: 34px; background: #3b3a39; color: #fff; display: flex; align-items: center; flex: none; }
.quick { margin: 2px 0 0 12px; }
.doc { width: 508px; font-size: 11.4px; font-weight: 500; padding-top: 7px; letter-spacing: .02px; }
.drop { margin: 3px 0 0 5px; border: 4.500px solid transparent; border-top: 5px solid #fff; border-bottom: 0; }
.tsearch { margin-left: 79px; width: 401px; height: 24px; background: #d2d0ce; border-radius: 2px; display: flex; align-items: center; padding-left: 18px; gap: 10px; color: #1f5a50; font-size: 13.200px; letter-spacing: -.2px; }
.signin { margin-left: 50px; width: 38px; font-size: 11.800px; }
.user { margin-left: 8px; }
.win { margin-left: 28px; }
.ribbon { height: 126px; background: #fafafa; flex: none; display: flex; flex-direction: column; position: relative; z-index: 2; box-shadow: 0 1px 3px rgba(0,0,0,.2); }
.tabs { height: 36px; display: flex; align-items: stretch; }
.tab { display: flex; justify-content: center; font-size: 13.200px; flex: none; }
.tab span { line-height: 32px; height: 31px; }
.tab.on span { font-weight: 600; border-bottom: 3px solid #117865; }
.share { margin: 4px 6px 8px auto; width: 84px; height: 24px; border: 0; border-radius: 4px; background: #117865; color: #fff; font: 600 11.500px "Open Sans"; display: flex; align-items: center; padding: 0 0 0 7px; gap: 4px; }
.share span { margin-left: 4px; width: 31px; letter-spacing: -.3px; }
.groups { display: flex; height: 90px; align-items: flex-start; }
.group { height: 88px; border-right: 1px solid #d2d0ce; display: flex; flex-direction: column; }
.clip { width: 161px; }
.cliprow { height: 79px; flex: none; display: flex; color: #c4c2c0; }
.paste { width: 50px; padding: 3px 0 0 15px; display: flex; flex-direction: column; }
.paste span { margin: 3px 0 0 -1px; line-height: 16px; }
.small { padding: 1px 0 0 2px; font-size: 11.300px; }
.small div { height: 24px; display: flex; align-items: center; gap: 2px; line-height: 20px; }
.small svg { margin-left: -1px; }
.btns { display: flex; height: 79px; flex: none; padding-top: 5px; color: #323130; font-size: 11.300px; }
.btn { flex: none; display: flex; flex-direction: column; align-items: center; }
.bico { margin-left: 2px; }
.btn span { line-height: 16px; display: flex; align-items: center; }
.bico + span { margin-top: 1px; }
.off { color: #c4c2c0; }
.chev { margin: 2px 0 0 3px; }
.btn.off .l2 { height: 16px; }
.btn.off .chev { margin: 0; }
.gname { font-size: 9.600px; line-height: 9px; text-align: center; color: #323130; }
.collapse { margin: 77px 4px 0 auto; }
.body { flex: none; height: 544px; display: flex; border-bottom: 1px solid #e1dfdd; }
.rail { width: 41px; border-right: 1px solid #dcdad8; }
.r { height: 40px; display: flex; align-items: center; justify-content: center; border-left: 3px solid transparent; padding-right: 2px; }
.sel { border-left-color: #117865; background: #f0efee; }
.center { width: 963px; display: flex; flex-direction: column; }
.upper { height: 508px; display: flex; }
.canvas { width: 762px; background: #fff; overflow: hidden; }
.matrix { margin: 24px 0 0 26px; width: 702px; height: 222px; overflow: hidden; font-size: 7.500px; color: #484644; }
.mrow { display: flex; height: 11.310px; align-items: stretch; line-height: 11.310px; }
.mhead { height: 19px; line-height: 16px; border-bottom: 1px solid #4ea3ee; }
.mbody { padding-top: .6px; }
.rh { width: 55px; flex: none; padding-left: 3px; border-right: 1px solid #4ea3ee; }
.mhead .rh { border: 0; }
.alt .rh { background: #ececec; }
.ch { flex: none; padding-left: 3px; letter-spacing: -.02px; }
.cell { flex: none; position: relative; text-align: right; padding-right: 3px; box-shadow: inset 0 -1px rgba(255,205,170,.4), inset -1px 0 rgba(255,205,170,.35); }
.cell span { position: relative; }
.bar { position: absolute; left: 2.500px; top: 0; bottom: 1px; background: #118dff; border-left: 1px solid #3d6ca4; }
.kpi { position: absolute; left: 3px; top: .5px; }
.total { font-weight: 700; color: #252423; }
.tcell { flex: none; text-align: right; padding-right: 3px; letter-spacing: .02px; }
.tcell:last-child { padding-right: 0; }
.hscroll { margin: 82px 0 0 27px; width: 325px; height: 4px; border-radius: 2px; background: #a3a2a0; }
.dots { margin: 97px 0 0 2px; height: 2px; background: repeating-linear-gradient(90deg, #222 0 2px, transparent 2px 4px); }
.filters { width: 201px; background: #fff; border-left: 1px solid #b3b0ad; }
.fhead { height: 45px; padding: 0 10px 7px 11px; display: flex; align-items: center; }
.fhead b { margin-left: 7px; font-size: 14.800px; font-weight: 600; flex: 1; }
.eye { margin-right: 16px; }
.fsearch { margin-left: 8px; width: 180px; height: 31px; border: 1px solid #a19f9d; border-radius: 2px; display: flex; align-items: center; padding-left: 10px; gap: 13px; font-size: 12px; }
.fsec { margin-top: 4px; border-top: 1px solid #b3b0ad; padding: 16px 8px 0; }
.fsec.two { margin-top: 26px; border: 0; padding-top: 0; }
.flabel { display: flex; justify-content: space-between; height: 25px; line-height: 18px; padding-right: 3px; font-size: 11.400px; }
.flabel em { font-style: normal; letter-spacing: 1.500px; color: #605e5c; }
.fbox { height: 46px; border: 1px solid #c8c6c4; border-radius: 2px; display: flex; align-items: center; justify-content: center; font-size: 11.400px; }
.pages { height: 35px; display: flex; align-items: flex-start; }
.dev { margin: 6px 0 0 10px; width: 24px; height: 25px; border-bottom: 3px solid #117865; display: flex; justify-content: center; }
.phone { margin: 5px 0 0 25px; }
.arrows { margin: 14px 0 0 20px; }
.pg { margin-left: 7px; width: 77px; height: 35px; background: #fff; border: 1px solid #a19f9d; border-top: 0; border-bottom: 4px solid #117865; line-height: 35px; text-align: center; font-weight: 500; }
.add { margin-top: 2px; width: 39px; height: 32px; background: #117865; display: flex; align-items: center; justify-content: center; }
.vizp { width: 182px; border-left: 1px solid #dcdad8; border-right: 1px solid #dcdad8; }
.vhead { height: 38px; display: flex; align-items: center; justify-content: space-between; padding: 0 8px; font-size: 14px; }
.vhead b { font-weight: 600; }
.build { padding-left: 8px; line-height: 16px; font-weight: 600; font-size: 11.200px; }
.modes { display: flex; margin-top: 3px; height: 36px; }
.mode { margin-left: 8px; width: 32px; height: 32px; background: #d2d0ce; border-radius: 2px; display: flex; align-items: center; justify-content: center; }
.fmt { margin: 3px 0 0 37px; }
.vgrid { display: grid; grid-template-columns: repeat(6, 28px); grid-auto-rows: 28px; padding: 6px 0 4px 6px; place-items: center; border-bottom: 1px solid #dcdad8; }
.wells { padding: 9px 5px 0 4px; font-size: 11.400px; }
.wl { padding-left: 8px; line-height: 16px; }
.well { margin-top: 5px; height: 28px; width: 170px; background: #fff; border: 1px dashed #bebbb8; line-height: 27px; padding-left: 10px; }
.drill { margin-top: 11px; font-weight: 600; color: #484644; font-size: 11.300px; }
.tog { display: flex; align-items: center; justify-content: space-between; height: 27px; padding: 0 17px 0 8px; }
.drill + .tog { margin-top: 3px; }
.sw { width: 32px; height: 16px; border: 1px solid #8a8886; border-radius: 8px; background: #fff; font-size: 9px; display: flex; align-items: center; justify-content: center; gap: 2px; color: #605e5c; }
.sw i { width: 8px; height: 8px; border-radius: 50%; background: #605e5c; }
.sw.on { background: #117865; border-color: #117865; color: #fff; font-weight: 600; }
.sw.on i { background: #fff; }
.d2 { margin-top: 5px; height: 26px; line-height: 25px; padding-left: 8px; font-size: 11.500px; }
.datap { width: 180px; }
.dsearch { margin: 7px 4px 0; height: 27px; border: 1px solid #8a8886; border-radius: 2px; display: flex; align-items: center; gap: 7px; padding-left: 7px; font-size: 12px; }
.tree { display: flex; align-items: center; margin: 13px 0 0 10px; font-size: 11.200px; }
.tree svg + svg { margin: 0 6px 0 7px; }
.status { height: 23px; flex: none; display: flex; justify-content: space-between; align-items: center; padding: 3px 18px 0 4px; color: #484644; }
.zoom { display: flex; align-items: center; color: #605e5c; }
.zoom span { margin: 0 19px 0 13px; }
.task { flex: 1; border-top: 1px solid #000; background: linear-gradient(90deg, #cfe6ee 0, #d0e5ee 35%, #d3e2f0 60%, #d6dded 80%, #d3dfea 100%); display: flex; align-items: center; }
.start { width: 48px; display: flex; justify-content: center; }
.wsearch { width: 288px; height: 39px; background: #fff; border: 1px solid #c6c6c6; display: flex; align-items: center; padding-left: 11px; gap: 11px; font-size: 14px; color: #333; }
.ti { height: 40px; display: flex; align-items: center; justify-content: center; padding-top: 1px; }
.view { width: 48px; }
.edge { width: 54px; }
.mail { width: 58px; }
.fox { width: 40px; }
.run { box-shadow: inset 0 -3px #0078d7; width: 40px; margin-left: 2px; }
.pbi { margin: 0 0 0 9px; padding-right: 1px; box-shadow: none; background: linear-gradient(90deg, #0078d7 32px, #66a8e0 32px) bottom / 100% 3px no-repeat; }
.weather { display: flex; align-items: center; gap: 10px; margin-left: 229px; width: 125px; font-size: 12.800px; color: #111; }
.eng { margin-left: 21px; width: 30px; font-size: 11.500px; color: #111; }
.clock { width: 70px; display: flex; flex-direction: column; align-items: center; font-size: 11.300px; line-height: 18px; color: #111; }
.note { margin-left: 11px; }
.peek { height: 40px; border-left: 1px solid #a3abb5; margin-left: auto; width: 5px; }
</style>
